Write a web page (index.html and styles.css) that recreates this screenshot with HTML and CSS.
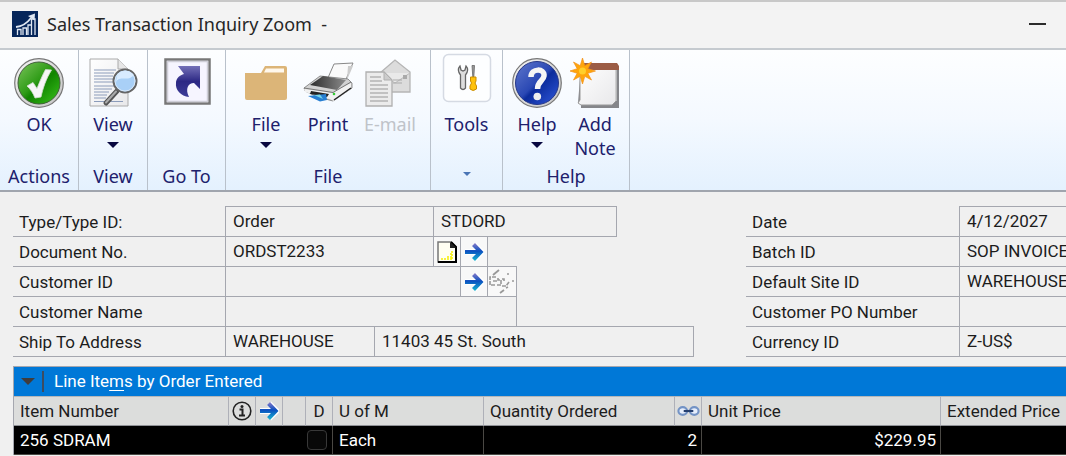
FILE: index.html
```
<!DOCTYPE html>
<html lang="en">
<head>
<meta charset="utf-8">
<title>Sales Transaction Inquiry Zoom</title>
<link rel="stylesheet" href="styles.css">
</head>
<body>
<svg class="defs" width="0" height="0" aria-hidden="true">
  <defs>
    <linearGradient id="ring" x1="0" y1="0" x2="1" y2="1"><stop offset="0" stop-color="#f4f4f4"/><stop offset="1" stop-color="#c4c4c4"/></linearGradient>
    <linearGradient id="green" x1="0" y1="0" x2="1" y2="1"><stop offset="0" stop-color="#7cc45c"/><stop offset=".45" stop-color="#2f9c17"/><stop offset=".55" stop-color="#118400"/><stop offset="1" stop-color="#3cc41e"/></linearGradient>
    <linearGradient id="blue" x1="0" y1="0" x2="1" y2="1"><stop offset="0" stop-color="#6078cc"/><stop offset=".48" stop-color="#2a48b4"/><stop offset=".55" stop-color="#0c2c9c"/><stop offset="1" stop-color="#3058dc"/></linearGradient>
    <linearGradient id="arrowfill" x1="0" y1="0" x2="0" y2="1"><stop offset="0" stop-color="#8a7cc8"/><stop offset=".45" stop-color="#0b50c0"/><stop offset="1" stop-color="#18b8d0"/></linearGradient>
    <linearGradient id="gofill" x1="0" y1="0" x2="0" y2="1"><stop offset="0" stop-color="#7470b8"/><stop offset=".5" stop-color="#2c2884"/><stop offset="1" stop-color="#3c3c98"/></linearGradient>
    <linearGradient id="paper" x1="0" y1="0" x2="1" y2="1"><stop offset="0" stop-color="#ffffff"/><stop offset="1" stop-color="#e8e8ea"/></linearGradient>
    <linearGradient id="dark" x1="0" y1="0" x2="1" y2="0"><stop offset="0" stop-color="#2c2c2c"/><stop offset="1" stop-color="#8c8c8c"/></linearGradient>
    <symbol id="arrow" viewBox="0 0 20 20"><path d="M1 10H17M10 2.500L17.500 10L10 17.500" fill="none" stroke="#fff" stroke-width="6"/><path d="M1 8H12L8 4L11 1L19.500 10L11 19L8 16L12 12H1Z" fill="url(#arrowfill)"/></symbol>
  </defs>
</svg>

<header class="titlebar">
  <svg class="app-icon" viewBox="0 0 26 26" aria-hidden="true">
    <rect width="26" height="26" fill="#06265a"/>
    <path d="M5.500 24V18.500H9V24M11 24V17H14.500V24M16 24V14H19.500V24M19.500 24V8H23V24" fill="none" stroke="#dfe7f2" stroke-width="1.300"/>
    <path d="M4 16C10 15.500 14 13.500 19 7" fill="none" stroke="#dfe7f2" stroke-width="1.800"/><path d="M16 5L23 2.500L22.500 9.500Z" fill="#dfe7f2"/>
  </svg>
  <h1 class="title">Sales Transaction Inquiry Zoom &nbsp;-</h1>
  <button class="minimize" type="button" aria-label="Minimize"></button>
</header>

<nav class="ribbon" aria-label="Ribbon">
  <section class="group group-actions">
    <div class="items">
      <button class="item" type="button">
        <svg class="icon" viewBox="0 0 50 50" aria-hidden="true"><circle cx="25" cy="25" r="24.300" fill="url(#ring)" stroke="#777" stroke-width="1.200"/><circle cx="25" cy="25" r="21" fill="url(#green)" stroke="#3f5f38"/><path d="M13 28L19 24.500L23 30.500C25.500 24 28.500 17 31.500 11.500L37.500 12C32 21 29 30 27 39L21 40C19 35 16.500 31 13 28Z" fill="#f6f6f6" stroke="#d2dccf" stroke-width=".8"/></svg>
        <span>OK</span>
      </button>
    </div>
    <h2 class="group-name">Actions</h2>
  </section>
  <section class="group group-view">
    <div class="items">
      <button class="item" type="button">
        <svg class="icon" viewBox="0 0 50 50" aria-hidden="true"><path d="M2 1H30L40 11V48H2Z" fill="url(#paper)" stroke="#aaa"/><path d="M30 1V11H40" fill="#e6e6e6" stroke="#aaa"/><path d="M6 12H28M6 15H26M6 18H25M6 21H25M6 24H26M6 28H28M6 31H24M6 34H21M6 37H19M6 40H18M6 43.500H35" stroke="#8c9cba" stroke-width="1"/><path d="M29 33L18 45" stroke="#555" stroke-width="5" stroke-linecap="round"/><path d="M28 33.500L18 44.500" stroke="#aaa" stroke-width="2" stroke-linecap="round"/><circle cx="37" cy="23" r="11.500" fill="#a9d0f7" stroke="#666" stroke-width="2"/><circle cx="37" cy="23" r="10" fill="none" stroke="#d8e8f8"/><path d="M28 24C32 16 39 25 46 17A10 10 0 0 0 29 18Z" fill="#d8ebff"/></svg>
        <span>View</span><i class="caret"></i>
      </button>
    </div>
    <h2 class="group-name">View</h2>
  </section>
  <section class="group group-goto">
    <div class="items">
      <button class="item" type="button" aria-label="Go To">
        <svg class="icon" viewBox="0 0 50 50" aria-hidden="true"><rect x="3.500" y="1.500" width="44" height="44" fill="#f6f5ff" stroke="#777" stroke-width="2.500"/><rect x="5.500" y="3.500" width="40" height="40" fill="none" stroke="#cfcfd8" stroke-width="1.500"/><path d="M16 8H38V31L32 25C26 25 23 31 27 39C19 38 13 32 14 25C14 20 18 17 22 16Z" fill="url(#gofill)"/></svg>
      </button>
    </div>
    <h2 class="group-name">Go To</h2>
  </section>
  <section class="group group-file">
    <div class="items">
      <button class="item" type="button">
        <svg class="icon" viewBox="0 0 50 50" aria-hidden="true"><path d="M4 15H20L24 8H44Q46 8 46 10V40Q46 42 44 42H6Q4 42 4 40Z" fill="#dcb578"/><path d="M23 14.500L25 10.500H43V14.500Z" fill="#fff8ec"/></svg>
        <span>File</span><i class="caret"></i>
      </button>
      <button class="item" type="button">
        <svg class="icon" viewBox="0 0 50 50" aria-hidden="true"><path d="M24 22L31 6L50 5L41 26Z" fill="#fafafa" stroke="#888"/><path d="M45 8L50 8L44 22Z" fill="#ccc"/><path d="M1 30L17 18L45 21L49 25V30L30 43L15 39L2 33Z" fill="#d2d2d2" stroke="#777" stroke-width=".8"/><path d="M7 27L20 18L43 22L34 32Z" fill="url(#dark)"/><path d="M1 31L30 35L34 32L48 25V31L31 43L27 41L2 34Z" fill="#f1f1f1"/><path d="M1 30L30 34.500L48 24" fill="none" stroke="#777"/><path d="M8 33L26 36L24 39L7 36Z" fill="#222"/><path d="M5 38L23 36L24 42L17 43.500Z" fill="#277fd2"/><path d="M11 37L17 36.500L20 41Z" fill="#76d5e8"/><path d="M31 42L48 30" stroke="#222" stroke-width="1.500"/><circle cx="31" cy="36" r="1.300" fill="#3c3"/></svg>
        <span>Print</span>
      </button>
      <button class="item" type="button" disabled>
        <svg class="icon" viewBox="0 0 50 50" aria-hidden="true"><path d="M15 15L30 2L45 14V34H15Z" fill="#dcdcdc" stroke="#b5b5b5" stroke-width="1.300"/><path d="M15 15L30 25L45 15" fill="#e9e9e9" stroke="#bcbcbc"/><path d="M28 22H37M28 25H37" stroke="#aaa" stroke-width="1.200"/><rect x="38" y="17" width="4" height="4" fill="#aaa"/><path d="M1 14H19L27 22V48H1Z" fill="#ebebeb" stroke="#b0b0b0" stroke-width="1.300"/><path d="M19 14V22H27Z" fill="#ccc" stroke="#b0b0b0"/><path d="M5 19H16M5 23H17M5 27H23M5 31H23M5 35H23M5 39H23M5 43H23" stroke="#b4b4b4" stroke-width="1.300"/></svg>
        <span>E-mail</span>
      </button>
    </div>
    <h2 class="group-name">File</h2>
  </section>
  <section class="group group-tools">
    <div class="items">
      <button class="item" type="button">
        <svg class="icon" viewBox="0 0 50 50" aria-hidden="true"><rect x="1.500" y="-3.500" width="47" height="47" rx="5" fill="#fdfeff" stroke="#d5dae3" stroke-width="1.500"/><path d="M18 8Q14.500 12 18.500 17V30Q21 33 23.500 30V17Q27.500 12 24 8L23 12L21 13L19 12Z" fill="#ddd" stroke="#666" stroke-width="1.300"/><path d="M30 7.500H32.500L31.800 19H30.800Z" fill="#999" stroke="#666" stroke-width=".8"/><path d="M28.500 19H34V23L33 25L34.500 28V31Q31 34 28 31V28L29.500 25L28.500 23Z" fill="#ffc20c" stroke="#c98c00"/></svg>
        <span>Tools</span>
      </button>
    </div>
    <button class="group-name launcher" type="button" aria-label="Tools menu"><i class="caret caret-small"></i></button>
  </section>
  <section class="group group-help">
    <div class="items">
      <button class="item" type="button">
        <svg class="icon" viewBox="0 0 50 50" aria-hidden="true"><circle cx="25" cy="25" r="24.300" fill="url(#ring)" stroke="#777" stroke-width="1.200"/><circle cx="25" cy="25" r="21.500" fill="url(#blue)" stroke="#26388a"/><path d="M19 19C19 10 33 10 32 18C31.500 23 25.500 23 25.500 31" fill="none" stroke="#f5f5f5" stroke-width="5.500"/><circle cx="25.300" cy="38.500" r="3.800" fill="#eee"/></svg>
        <span>Help</span><i class="caret"></i>
      </button>
      <button class="item" type="button">
        <svg class="icon" viewBox="0 0 50 50" aria-hidden="true"><path d="M11 8H49V50H11V45H8Z" fill="#85868a"/><path d="M10 8H46V43L42 47H11L8 45L10 42Z" fill="url(#paper)" stroke="#999"/><path d="M13 5H47L49 8V12H13Z" fill="#9b5c45"/><path d="M46 12V43" stroke="#ddd"/><path d="M12.500 0L14.800 7.700L21.500 4L17.800 10.700L25.500 13L17.800 15.300L21.500 22L14.800 18.300L12.500 26L10.200 18.300L3.500 22L7.200 15.300L0 13L7.200 10.700L3.500 4L10.200 7.700Z" fill="#ffa50a" stroke="#f29018" stroke-width=".7"/><circle cx="12.500" cy="13" r="3.500" fill="#ffcf2a"/></svg>
        <span>Add<br>Note</span>
      </button>
    </div>
    <h2 class="group-name">Help</h2>
  </section>
</nav>

<main class="content">
  <form class="form">
    <div class="form-left">
      <div class="row"><label for="type">Type/Type ID:</label><div class="fields fields-type"><input id="type" readonly value="Order"><input aria-label="Type ID" readonly value="STDORD"></div></div>
      <div class="row"><label for="doc">Document No.</label><div class="fields fields-doc"><input id="doc" readonly value="ORDST2233"><button type="button" aria-label="Note"><svg viewBox="0 0 20 22" aria-hidden="true"><path d="M1 1H14L19 6V21H1Z" fill="#fffef2" stroke="#777" stroke-width="1.500"/><path d="M14 1L19 6V21H1" fill="none" stroke="#000" stroke-width="2"/><path d="M13 1V7H19Z" fill="#222"/><path d="M4 18H15M10 16H16M13 13H16M15 10V18" stroke="#f5ee00" stroke-width="1.500" stroke-dasharray="2 1"/></svg></button><button type="button" aria-label="Document link"><svg viewBox="0 0 20 20" aria-hidden="true"><use href="#arrow"/></svg></button></div></div>
      <div class="row"><label for="cust">Customer ID</label><div class="fields fields-cust"><input id="cust" readonly value=""><button type="button" aria-label="Customer link"><svg viewBox="0 0 20 20" aria-hidden="true"><use href="#arrow"/></svg></button><button class="wide" type="button" aria-label="Customer attachments" disabled><svg class="attach" viewBox="0 0 28 28" aria-hidden="true"><path d="M5 7L11 2M12 25L16 22" stroke="#999" stroke-width="1.800"/><path d="M8 9H2V17H8M5 13H9M10 10V12H13V17H8M14 11H16V13M14 18H18L21 14M19 6H21M24 13H26M18 20L20 19" fill="none" stroke="#999" stroke-width="1.600" stroke-dasharray="4 1"/></svg></button></div></div>
      <div class="row"><label for="name">Customer Name</label><div class="fields fields-name"><input id="name" readonly value=""></div></div>
      <div class="row"><label for="ship">Ship To Address</label><div class="fields fields-ship"><input id="ship" readonly value="WAREHOUSE"><input aria-label="Street" readonly value="11403 45 St. South"></div></div>
    </div>
    <div class="form-right">
      <div class="row"><label for="date">Date</label><div class="fields"><input id="date" readonly value="4/12/2027"></div></div>
      <div class="row"><label for="batch">Batch ID</label><div class="fields"><input id="batch" readonly value="SOP INVOICE"></div></div>
      <div class="row"><label for="site">Default Site ID</label><div class="fields"><input id="site" readonly value="WAREHOUSE"></div></div>
      <div class="row"><label for="po">Customer PO Number</label><div class="fields"><input id="po" readonly value=""></div></div>
      <div class="row"><label for="cur">Currency ID</label><div class="fields"><input id="cur" readonly value="Z-US$"></div></div>
    </div>
  </form>

  <section class="lines">
    <div class="lines-bar"><button class="sorter" type="button" aria-label="Sort"><i class="caret caret-sort"></i></button><h2>Line Ite<u>m</u>s by Order Entered</h2></div>
    <table>
      <colgroup><col class="c-item"><col class="c-icon"><col class="c-icon"><col class="c-gap"><col class="c-icon"><col class="c-unit"><col class="c-qty"><col class="c-icon"><col class="c-price"><col></colgroup>
      <thead><tr>
        <th>Item Number</th>
        <th class="pic"><svg viewBox="0 0 20 20" role="img" aria-label="Information"><circle cx="10" cy="10" r="8.800" fill="none" stroke="#222" stroke-width="1.600"/><circle cx="10" cy="5.500" r="1.500" fill="#222"/><path d="M7.500 8.500H10.500V14.500M7 14.500H13" fill="none" stroke="#222" stroke-width="2"/></svg></th>
        <th class="pic"><svg viewBox="0 0 20 20" role="img" aria-label="Link"><use href="#arrow"/></svg></th>
        <th></th><th class="pic">D</th><th>U of M</th><th>Quantity Ordered</th>
        <th class="pic"><svg class="chain" viewBox="0 0 24 14" role="img" aria-label="Chain"><ellipse cx="6" cy="7" rx="4.500" ry="4" fill="#e6eefc" stroke="#7393c5" stroke-width="2.200"/><ellipse cx="18" cy="7" rx="4.500" ry="4" fill="#e6eefc" stroke="#7393c5" stroke-width="2.200"/><path d="M7 7H17" stroke="#243f70" stroke-width="2.200"/></svg></th>
        <th>Unit Price</th><th>Extended Price</th>
      </tr></thead>
      <tbody><tr>
        <td colspan="4">256 SDRAM</td><td class="pic"><input type="checkbox" aria-label="Drop ship"></td><td>Each</td><td class="num" colspan="2">2</td><td class="num">$229.95</td><td></td>
      </tr></tbody>
    </table>
  </section>
</main>
</body>
</html>
```
FILE: styles.css
```
* { box-sizing: border-box; }
body {
  margin: 0;
  background: #f0f0f0;
  color: #1c1c1c;
  font-family: Roboto, "Liberation Sans", sans-serif;
  font-size: 17px;
  overflow: hidden;
}
h1, h2 { margin: 0; font-size: inherit; font-weight: 400; }
button { margin: 0; padding: 0; border: 0; background: none; color: inherit; font: inherit; }
svg { display: block; }
.defs { position: absolute; }

.titlebar {
  display: flex;
  align-items: center;
  height: 50px;
  padding: 0 20px 2px 12px;
  background: #f3f3f3;
  border-top: 2px solid #c8c8c8;
  border-bottom: 2px solid #c5cacf;
  font-family: "Noto Sans", sans-serif;
}
.app-icon { width: 26px; height: 26px; }
.title { flex: 1; margin-left: 9px; font-size: 18px; color: #262626; }
.minimize { width: 17px; height: 16px; }
.minimize::before { content: ""; display: block; height: 2px; background: #2b2b2b; }

.ribbon {
  display: flex;
  height: 142px;
  background: linear-gradient(#fdfeff, #f4f9ff 50%, #e4f1fe);
  border-bottom: 2px solid #a0a5ae;
  color: #20206c;
  font-family: "Noto Sans", sans-serif;
  font-size: 18px;
  line-height: 24px;
}
.group { display: flex; flex-direction: column; justify-content: space-between; border-right: 1px solid #b9c1cb; padding-bottom: 2px; }
.group-actions { width: 79px; }
.group-view { width: 69px; }
.group-goto { width: 78px; }
.group-file { width: 205px; }
.group-tools { width: 72px; }
.group-help { width: 127px; }
.items { display: flex; justify-content: center; padding-top: 8px; }
.item { display: flex; flex-direction: column; align-items: center; width: 62px; }
.group-help .item { width: 58px; }
.item:disabled { color: #bfc3c9; }
.icon { width: 50px; height: 50px; margin-bottom: 4px; overflow: visible; }
.group-name { text-align: center; }
.caret { width: 0; height: 0; border: 6px solid transparent; border-top-color: #080840; border-bottom: 0; }
.item .caret { margin-top: 6px; }
.caret-small { border-width: 4px; border-top-color: #4a75b5; border-bottom: 0; }
.launcher { display: flex; justify-content: center; align-items: center; height: 28px; }

.content { padding: 14px 0 0 13px; }
.form { display: flex; gap: 52px; }
.form-left { flex: 0 0 681px; }
.form-right { flex: 1; min-width: 0; }
.row { display: flex; height: 31px; margin-bottom: -1px; }
label { flex: 0 0 212px; padding: 2px 0 0 6px; border-bottom: 1px solid #a5a7af; line-height: 28px; white-space: nowrap; }
.fields { display: flex; flex: 1; min-width: 0; border: 1px solid #a5a7af; }
.form-right .fields { border-right: 0; flex: 1; }
.form-right label { flex-basis: 213px; }
.fields input { flex: 1; min-width: 0; margin: 0; padding: 0 0 2px 7px; border: 0; background: none; color: inherit; font: inherit; border-radius: 0; }
.fields input + input { border-left: 1px solid #a5a7af; }
.fields button { display: grid; place-items: center; width: 27px; border-left: 1px solid #a5a7af; background: #f8f8f8; }
.fields button.wide { width: 29px; }
.fields button svg { width: 20px; height: 22px; }
.fields button .attach { width: 28px; height: 28px; }
.fields-type { flex: 0 0 392px; }
.fields-type input:first-child { flex: 0 0 207px; }
.fields-doc { flex: 0 0 263px; }
.fields-cust, .fields-name { flex: 0 0 292px; }
.fields-ship input:first-child { flex: 0 0 148px; }

.lines { margin-top: 10px; border-left: 1px solid #a5a7af; border-top: 1px solid #a5a7af; }
.lines-bar { display: flex; align-items: center; height: 29px; padding-bottom: 1px; background: #0078d7; color: #fff; }
.sorter { display: grid; place-items: center; width: 30px; height: 21px; border-right: 2px solid #3d4c60; }
.caret-sort { border-width: 7px; border-top-color: #403c3c; border-bottom: 0; }
.lines-bar h2 { padding-left: 10px; }
u { text-underline-offset: 3px; }
table { width: 100%; table-layout: fixed; border-collapse: separate; border-spacing: 0; }
th, td { height: 30px; padding: 0 6px; border-right: 1px solid #aeb0b8; font-weight: 400; text-align: left; white-space: nowrap; }
th { background: #dcdddc; border-top: 1px solid #b5b7ba; border-bottom: 1px solid #8f9196; }
td { height: 29px; background: #000; color: #fff; border-right-color: #4a4844; border-bottom: 1px solid #4a4844; }
th:last-child, td:last-child { border-right: 0; }
td:first-child { border-right: 0; }
.pic { padding: 0; text-align: center; }
.pic svg { width: 20px; height: 20px; margin: 0 auto; }
.pic .chain { width: 23px; height: 14px; }
.num { text-align: right; padding-right: 4px; }
.c-item { width: 215px; }
.c-icon { width: 27px; }
.c-gap { width: 23px; }
.c-unit { width: 151px; }
.c-qty { width: 191px; }
.c-price { width: 239px; }
input[type="checkbox"] { appearance: none; display: block; width: 20px; height: 20px; margin: 0 1px; border: 1px solid #383838; border-radius: 4px; background: #080808; }
```
